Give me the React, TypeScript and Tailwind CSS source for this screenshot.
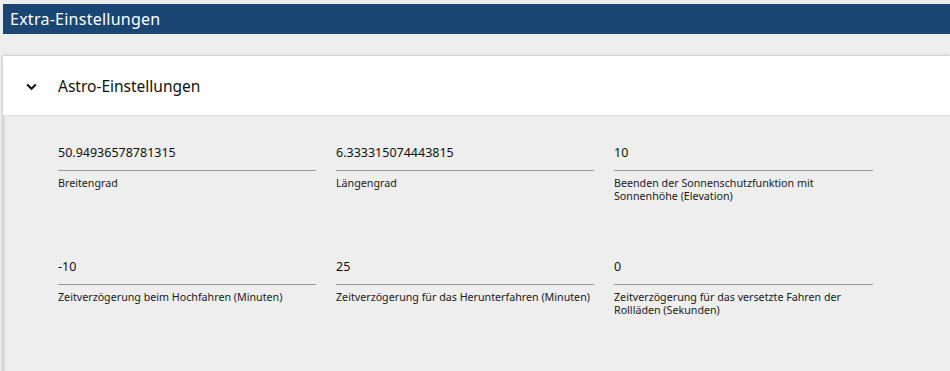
import React from 'react';

const fields = [
  { value: '50.94936578781315', label: 'Breitengrad' },
  { value: '6.333315074443815', label: 'Längengrad' },
  { value: '10', label: 'Beenden der Sonnenschutzfunktion mit Sonnenhöhe (Elevation)' },
  { value: '-10', label: 'Zeitverzögerung beim Hochfahren (Minuten)' },
  { value: '25', label: 'Zeitverzögerung für das Herunterfahren (Minuten)' },
  { value: '0', label: 'Zeitverzögerung für das versetzte Fahren der Rollläden (Sekunden)' }
];

export default function App() {
  return (
    <div className="w-[950px] h-[371px] overflow-hidden bg-[#eeeeee] pt-1 pl-[3px] font-['Noto_Sans',sans-serif] text-[#222]">
      {/* Kopfzeile */}
      <div className="h-[30px] bg-[#1a4674] flex items-center pl-[7px]">
        <span className="text-white text-[16px] tracking-[0.25px]">Extra-Einstellungen</span>
      </div>

      <div className="mt-[22px] bg-white shadow-[0_-1px_3px_rgba(0,0,0,0.12),-1px_0_2px_rgba(0,0,0,0.1)]">
        {/* Astro-Einstellungen */}
        <div className="h-[60px] flex items-center border-b border-[#dddddd] pt-[3px]">
          <svg width="11" height="8" viewBox="0 0 11 8" className="ml-[23px]">
            <path d="M1.2 1.5 L5.5 5.8 L9.8 1.5" fill="none" stroke="#111" strokeWidth="2" />
          </svg>
          <span className="ml-[21px] text-[15.5px] text-[#111]">Astro-Einstellungen</span>
        </div>

        <div className="bg-[#eeeeee] h-[260px] border-l-2 border-[#d8d8d8] pl-[53px] pt-[28px]">
          <div className="grid grid-cols-[258px_258px_259px] gap-x-5 gap-y-[55px]">
            {fields.map((f, i) => (
              <div key={i}>
                <div className="text-[12.5px] leading-[18px] h-[26px] text-[#111]">{f.value}</div>
                <div className="h-px bg-[#999999]" />
                <div className="text-[10.7px] leading-[13px] mt-[6px] text-[#1a1a1a]">{f.label}</div>
              </div>
            ))}
          </div>
        </div>
      </div>
    </div>
  );
}
